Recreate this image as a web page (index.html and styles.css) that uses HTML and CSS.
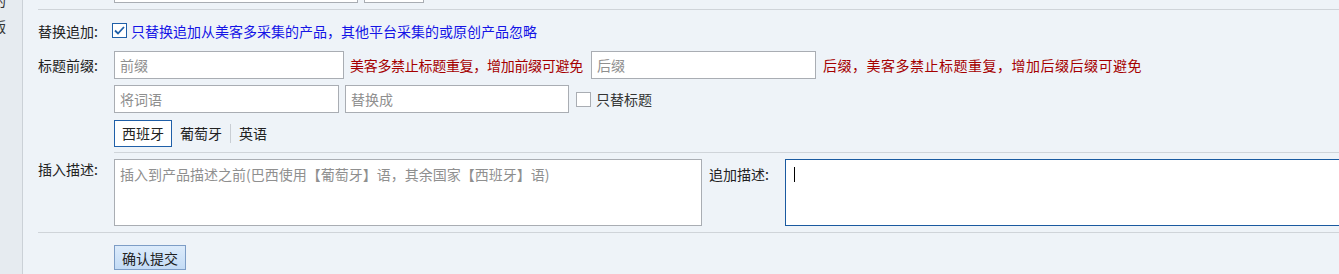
FILE: index.html
```html
<!DOCTYPE html>
<html lang="zh">
<head>
<meta charset="utf-8">
<link rel="stylesheet" href="styles.css">
</head>
<body>
<div class="page">
  <aside class="sidebar">
    <div class="side-inner">
      <div class="side-item first">的</div>
      <div class="side-item">版</div>
    </div>
  </aside>
  <main class="main">
    <div class="row top-row">
      <div class="label"></div>
      <div class="content">
        <input class="inp w244" type="text">
        <input class="inp w60" type="text">
      </div>
    </div>
    <div class="sep full"></div>

    <div class="row r-check">
      <div class="label">替换追加:</div>
      <div class="content">
        <span class="cbox checked">
          <svg width="11" height="9" viewBox="0 0 11 9"><path d="M1 4.5 L4 7.5 L10 1" fill="none" stroke="#1f5fa8" stroke-width="1.8"/></svg>
        </span>
        <span class="blue">只替换追加从美客多采集的产品，其他平台采集的或原创产品忽略</span>
      </div>
    </div>

    <div class="row r-input">
      <div class="label">标题前缀:</div>
      <div class="content">
        <input class="inp w230" type="text" placeholder="前缀">
        <span class="red narrow g6">美客多禁止标题重复，增加前缀可避免</span>
        <input class="inp w225 g8" type="text" placeholder="后缀">
        <span class="red wide g7">后缀，美客多禁止标题重复，增加后缀后缀可避免</span>
      </div>
    </div>

    <div class="row r-input2">
      <div class="label"></div>
      <div class="content">
        <input class="inp w225" type="text" placeholder="将词语">
        <input class="inp w224 g6" type="text" placeholder="替换成">
        <span class="cbox g7"></span>
        <span class="g5 plain">只替标题</span>
      </div>
    </div>

    <div class="row r-tabs">
      <div class="label"></div>
      <div class="content tabs">
        <span class="tab active">西班牙</span>
        <span class="tab">葡萄牙</span>
        <span class="tab-sep"></span>
        <span class="tab">英语</span>
      </div>
    </div>
    <div class="sep inner"></div>

    <div class="row r-desc">
      <div class="label">插入描述:</div>
      <div class="content desc">
        <textarea class="ta w588" placeholder="插入到产品描述之前(巴西使用【葡萄牙】语，其余国家【西班牙】语)"></textarea>
        <div class="label2">追加描述:</div>
        <div class="ta-wrap">
          <textarea class="ta focus"></textarea>
          <span class="caret"></span>
        </div>
      </div>
    </div>
    <div class="sep full"></div>

    <div class="row r-btn">
      <div class="label"></div>
      <div class="content">
        <button class="btn" type="button">确认提交</button>
      </div>
    </div>
  </main>
</div>
</body>
</html>
```

FILE: styles.css
```css
* { box-sizing: border-box; }
html, body {
  margin: 0;
  padding: 0;
  width: 1339px;
  height: 274px;
  overflow: hidden;
  background: #eef3f8;
}
body {
  font-family: "Noto Sans CJK SC", "Noto Sans", sans-serif;
  font-size: 14px;
  color: #222;
}
.page {
  display: flex;
  height: 274px;
}
.sidebar {
  width: 23px;
  flex: none;
  background: #e6ebf0;
  border-right: 1px solid #cbd1d7;
  overflow: hidden;
}
.side-inner {
  margin-left: -8px;
  color: #333;
}
.side-item {
  height: 26px;
  line-height: 26px;
}
.side-item.first {
  margin-top: -13px;
}
.main {
  flex: 1;
  min-width: 0;
  padding-left: 15px;
}
.row {
  display: flex;
  align-items: center;
}
.label {
  width: 76px;
  flex: none;
  white-space: nowrap;
}
.content {
  display: flex;
  align-items: center;
  white-space: nowrap;
}
.top-row {
  margin-top: -25px;
  height: 28px;
  align-items: flex-end;
}
.sep {
  height: 1px;
  background: #cfd4d9;
}
.sep.full { margin-top: 6px; }
.sep.inner { margin-left: 76px; margin-top: 5px; }

.r-check { height: 41px; }
.r-input { height: 28px; }
.r-input2 { height: 28px; margin-top: 6px; }
.r-tabs { height: 28px; margin-top: 6px; }
.r-desc { margin-top: 6px; align-items: flex-start; }
.r-btn { margin-top: 12px; }

.inp {
  height: 28px;
  border: 1px solid #a9adb3;
  background: #fff;
  padding: 0 5px;
  font-family: inherit;
  font-size: 14px;
  color: #333;
  outline: none;
}
.inp::placeholder, .ta::placeholder { color: #8f8f8f; }
.w244 { width: 244px; }
.w60 { width: 60px; margin-left: 6px; }
.w230 { width: 230px; }
.w225 { width: 225px; }
.w224 { width: 224px; }
.g5 { margin-left: 5px; }
.g6 { margin-left: 6px; }
.g7 { margin-left: 7px; }
.g8 { margin-left: 8px; }

.cbox {
  width: 15px;
  height: 15px;
  border: 1px solid #a9adb3;
  background: #fff;
  display: inline-flex;
  align-items: center;
  justify-content: center;
  flex: none;
}
.cbox.checked {
  border-color: #1f5fa8;
  margin-left: -2px;
}
.blue { color: #1414e6; margin-left: 4px; }
.red { color: #a50000; }
.red.narrow { letter-spacing: -0.3px; }
.red.wide { letter-spacing: 0.5px; }
.plain { color: #333; }

.tab {
  height: 27px;
  line-height: 25px;
  padding: 0 7px;
  border: 1px solid transparent;
}
.tab.active {
  border-color: #1f5fa8;
  background: #fff;
  padding: 0 7px;
}
.tab-sep {
  width: 1px;
  height: 19px;
  background: #c9ced4;
}

.desc { align-items: flex-start; }
.ta {
  height: 67px;
  border: 1px solid #a9adb3;
  background: #fff;
  padding: 4px 5px;
  font-family: inherit;
  font-size: 14px;
  resize: none;
  outline: none;
  display: block;
}
.w588 { width: 588px; }
.label2 {
  margin-left: 7px;
  width: 76px;
  padding-top: 5px;
  flex: none;
}
.ta-wrap { position: relative; }
.ta.focus {
  width: 600px;
  border: 1px solid #1a5aa0;
}
.caret {
  position: absolute;
  left: 9px;
  top: 8px;
  width: 1px;
  height: 15px;
  background: #000;
}
.btn {
  height: 25px;
  width: 72px;
  padding: 0;
  border: 1px solid #7d9dc6;
  background: linear-gradient(#dcebfb, #c3dbf5);
  font-family: inherit;
  font-size: 14px;
  color: #222;
}
```
